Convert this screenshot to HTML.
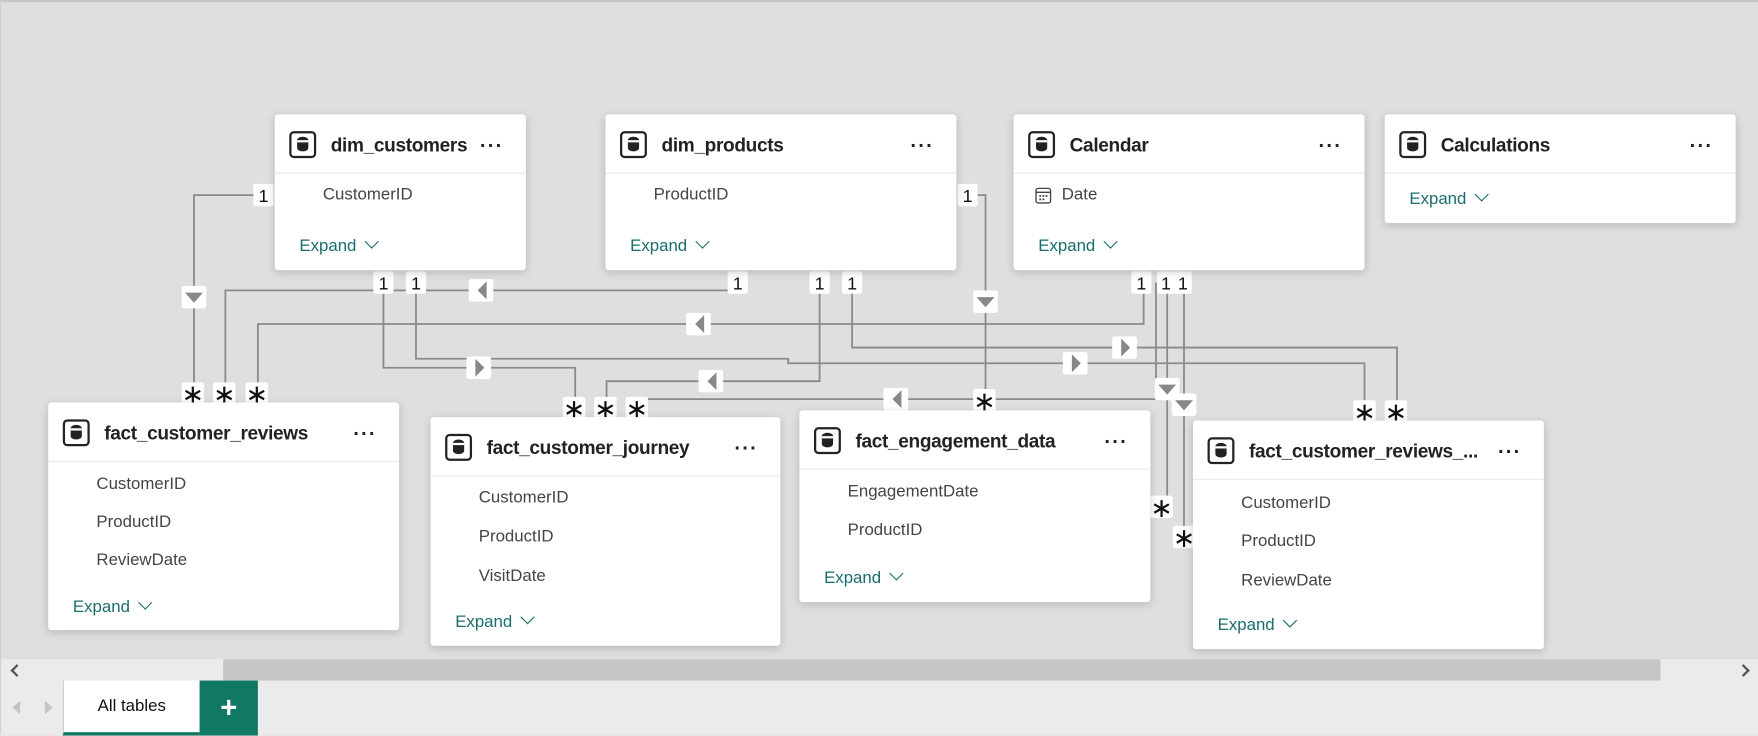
<!DOCTYPE html>
<html><head><meta charset="utf-8"><style>
html,body{margin:0;padding:0;width:1758px;height:733px;overflow:hidden;background:#e0dfdd;}
#w{position:absolute;left:0;top:0;width:1568px;height:654px;transform:scale(1.1212);transform-origin:0 0;font-family:"Liberation Sans",sans-serif;background:#e0dfdd;border-top:2px solid #c9c8c6;box-sizing:border-box;border-left:1px solid #d0d0d0}
.card{position:absolute;background:#fff;border-radius:3px;box-shadow:0 2px 8px rgba(0,0,0,.18);}
.hd{position:absolute;left:0;right:0;top:0;height:52px;border-bottom:1px solid #e8e8e8}
.ic{position:absolute;left:13px;top:15px;width:20px;height:20px;border:2px solid #222;border-radius:4px}
.ic:before{content:"";position:absolute;left:5px;top:3px;width:10px;height:13px;background:#222;border-radius:5px/3px}
.ic:after{content:"";position:absolute;left:5px;top:6px;width:10px;height:1.5px;background:#fff}
.t{position:absolute;left:50px;top:18px;font-size:17px;font-weight:bold;color:#222;white-space:nowrap;letter-spacing:-0.3px}
.dots{position:absolute;right:20px;top:18px;font-size:18px;font-weight:bold;letter-spacing:1px;color:#222}
.f{position:absolute;left:43px;font-size:15px;color:#444}
.ex{position:absolute;left:22px;font-size:15px;color:#1b6d6d}
.ex:after{content:"";display:inline-block;width:8px;height:8px;border-right:1.3px solid #1b6d6d;border-bottom:1.3px solid #1b6d6d;transform:rotate(45deg);margin-left:9px;position:relative;top:-4px}
</style></head><body><div id="w">
<svg width="1568" height="654" style="position:absolute;left:0;top:0" font-family="Liberation Sans,sans-serif">
<g stroke="#8a8a8a" stroke-width="1.6" fill="none">
<polyline points="234,172 172,172 172,345"/>
<polyline points="657,257 200,257 200,345"/>
<polyline points="1019,250 1019,287 229,287 229,345"/>
<polyline points="341,250 341,326 512,326 512,362"/>
<polyline points="370,250 370,318 702,318 702,322 1216,322 1216,366"/>
<polyline points="730,250 730,338 540,338 540,362"/>
<polyline points="759,250 759,308 1245,308 1245,366"/>
<polyline points="862,172 878,172 878,356"/>
<polyline points="568,362 568,354 1030,354 1030,250"/>
<polyline points="1040,250 1040,450"/>
<polyline points="1055,250 1055,477"/>
</g>
<g fill="#fff">
<rect x="225" y="162" width="18" height="20" rx="2"/>
<rect x="332" y="240" width="18" height="20" rx="2"/><rect x="361" y="240" width="18" height="20" rx="2"/>
<rect x="648" y="240" width="18" height="20" rx="2"/><rect x="721" y="240" width="18" height="20" rx="2"/><rect x="750" y="240" width="18" height="20" rx="2"/>
<rect x="853" y="162" width="18" height="20" rx="2"/>
<rect x="1008" y="240" width="18" height="20" rx="2"/><rect x="1031" y="240" width="16" height="20" rx="2"/><rect x="1046" y="240" width="16" height="20" rx="2"/>
<rect x="161" y="253" width="22" height="20" rx="2"/><rect x="867" y="257" width="22" height="20" rx="2"/>
<rect x="417" y="247" width="22" height="20" rx="2"/><rect x="611" y="277" width="22" height="20" rx="2"/>
<rect x="415" y="316" width="22" height="20" rx="2"/><rect x="622" y="328" width="22" height="20" rx="2"/>
<rect x="787" y="344" width="22" height="20" rx="2"/><rect x="947" y="312" width="22" height="20" rx="2"/>
<rect x="991" y="298" width="22" height="20" rx="2"/>
<rect x="1029" y="335" width="22" height="20" rx="2"/><rect x="1044" y="349" width="22" height="20" rx="2"/>
<rect x="161" y="339" width="20" height="20" rx="2"/><rect x="189" y="339" width="20" height="20" rx="2"/><rect x="218" y="339" width="20" height="20" rx="2"/>
<rect x="501" y="352" width="20" height="20" rx="2"/><rect x="529" y="352" width="20" height="20" rx="2"/><rect x="557" y="352" width="20" height="20" rx="2"/>
<rect x="867" y="345" width="20" height="20" rx="2"/>
<rect x="1206" y="355" width="20" height="20" rx="2"/><rect x="1234" y="355" width="20" height="20" rx="2"/>
<rect x="1025" y="440" width="20" height="20" rx="2"/><rect x="1045" y="467" width="20" height="20" rx="2"/>
</g>
<g fill="#888">
<polygon points="164,259 180,259 172,268"/><polygon points="870,263 886,263 878,272"/>
<polygon points="1032,341 1048,341 1040,350"/><polygon points="1047,355 1063,355 1055,364"/>
<polygon points="433,249 433,265 425,257"/><polygon points="627,279 627,295 619,287"/>
<polygon points="638,330 638,346 630,338"/><polygon points="803,346 803,362 795,354"/>
<polygon points="423,318 423,334 431,326"/><polygon points="955,314 955,330 963,322"/>
<polygon points="999,300 999,316 1007,308"/>
</g>
<g font-size="16" fill="#111" text-anchor="middle">
<text x="234" y="178">1</text><text x="341" y="256">1</text><text x="370" y="256">1</text>
<text x="657" y="256">1</text><text x="730" y="256">1</text><text x="759" y="256">1</text>
<text x="862" y="178">1</text><text x="1017" y="256">1</text><text x="1039" y="256">1</text><text x="1054" y="256">1</text>
</g>
<g font-size="24" fill="#111" text-anchor="middle">
<text x="171" y="358">∗</text><text x="199" y="358">∗</text><text x="228" y="358">∗</text>
<text x="511" y="371">∗</text><text x="539" y="371">∗</text><text x="567" y="371">∗</text>
<text x="877" y="364">∗</text><text x="1216" y="374">∗</text><text x="1244" y="374">∗</text>
<text x="1035" y="459">∗</text><text x="1055" y="486">∗</text>
</g>
</svg>

<div class="card" style="left:244px;top:100px;width:224px;height:139px"><div class="hd"><div class="ic"></div><div class="t">dim_customers</div><div class="dots">···</div></div><div class="f" style="top:63px">CustomerID</div><div class="ex" style="top:109px">Expand</div></div>
<div class="card" style="left:539px;top:100px;width:313px;height:139px"><div class="hd"><div class="ic"></div><div class="t">dim_products</div><div class="dots">···</div></div><div class="f" style="top:63px">ProductID</div><div class="ex" style="top:109px">Expand</div></div>
<div class="card" style="left:903px;top:100px;width:313px;height:139px"><div class="hd"><div class="ic"></div><div class="t">Calendar</div><div class="dots">···</div></div>
<svg style="position:absolute;left:19px;top:65px" width="15" height="15"><rect x="1" y="1" width="13" height="13" rx="2" fill="none" stroke="#444" stroke-width="1.2"/><line x1="1" y1="4.5" x2="14" y2="4.5" stroke="#444" stroke-width="1.2"/><g fill="#444"><rect x="4" y="7" width="1.6" height="1.6"/><rect x="6.8" y="7" width="1.6" height="1.6"/><rect x="9.6" y="7" width="1.6" height="1.6"/><rect x="4" y="10" width="1.6" height="1.6"/><rect x="6.8" y="10" width="1.6" height="1.6"/></g></svg>
<div class="f" style="top:63px">Date</div><div class="ex" style="top:109px">Expand</div></div>
<div class="card" style="left:1234px;top:100px;width:313px;height:97px"><div class="hd"><div class="ic"></div><div class="t">Calculations</div><div class="dots">···</div></div><div class="ex" style="top:67px">Expand</div></div>

<div class="card" style="left:42px;top:357px;width:313px;height:203px"><div class="hd"><div class="ic"></div><div class="t">fact_customer_reviews</div><div class="dots">···</div></div><div class="f" style="top:64px">CustomerID</div><div class="f" style="top:98px">ProductID</div><div class="f" style="top:132px">ReviewDate</div><div class="ex" style="top:174px">Expand</div></div>
<div class="card" style="left:383px;top:370px;width:312px;height:204px"><div class="hd"><div class="ic"></div><div class="t">fact_customer_journey</div><div class="dots">···</div></div><div class="f" style="top:63px">CustomerID</div><div class="f" style="top:98px">ProductID</div><div class="f" style="top:133px">VisitDate</div><div class="ex" style="top:174px">Expand</div></div>
<div class="card" style="left:712px;top:364px;width:313px;height:171px"><div class="hd"><div class="ic"></div><div class="t">fact_engagement_data</div><div class="dots">···</div></div><div class="f" style="top:64px">EngagementDate</div><div class="f" style="top:98px">ProductID</div><div class="ex" style="top:141px">Expand</div></div>
<div class="card" style="left:1063px;top:373px;width:313px;height:204px"><div class="hd"><div class="ic"></div><div class="t">fact_customer_reviews_...</div><div class="dots">···</div></div><div class="f" style="top:65px">CustomerID</div><div class="f" style="top:99px">ProductID</div><div class="f" style="top:134px">ReviewDate</div><div class="ex" style="top:174px">Expand</div></div>

<div style="position:absolute;left:0;top:586px;width:1568px;height:19px;background:#ebebeb"></div>
<div style="position:absolute;left:198px;top:586px;width:1282px;height:19px;background:#c6c6c6"></div>
<div style="position:absolute;left:10px;top:592px;width:6px;height:6px;border-left:2px solid #555;border-bottom:2px solid #555;transform:rotate(45deg)"></div>
<div style="position:absolute;left:1550px;top:592px;width:6px;height:6px;border-right:2px solid #555;border-top:2px solid #555;transform:rotate(45deg)"></div>
<div style="position:absolute;left:0;top:605px;width:1568px;height:49px;background:#ebebeb"></div>
<div style="position:absolute;left:10px;top:623px;border-right:7px solid #c4c4c4;border-top:6px solid transparent;border-bottom:6px solid transparent"></div>
<div style="position:absolute;left:39px;top:623px;border-left:7px solid #c4c4c4;border-top:6px solid transparent;border-bottom:6px solid transparent"></div>
<div style="position:absolute;left:55px;top:605px;width:121px;height:46px;background:#fff;border-left:1px solid #ccc;border-bottom:3px solid #117865;text-align:center;line-height:46px;font-size:15px;color:#111">All tables</div>
<div style="position:absolute;left:177px;top:605px;width:52px;height:49px;background:#117865;color:#fff;text-align:center;line-height:49px;font-size:26px;font-weight:bold">+</div>
</div></body></html>
